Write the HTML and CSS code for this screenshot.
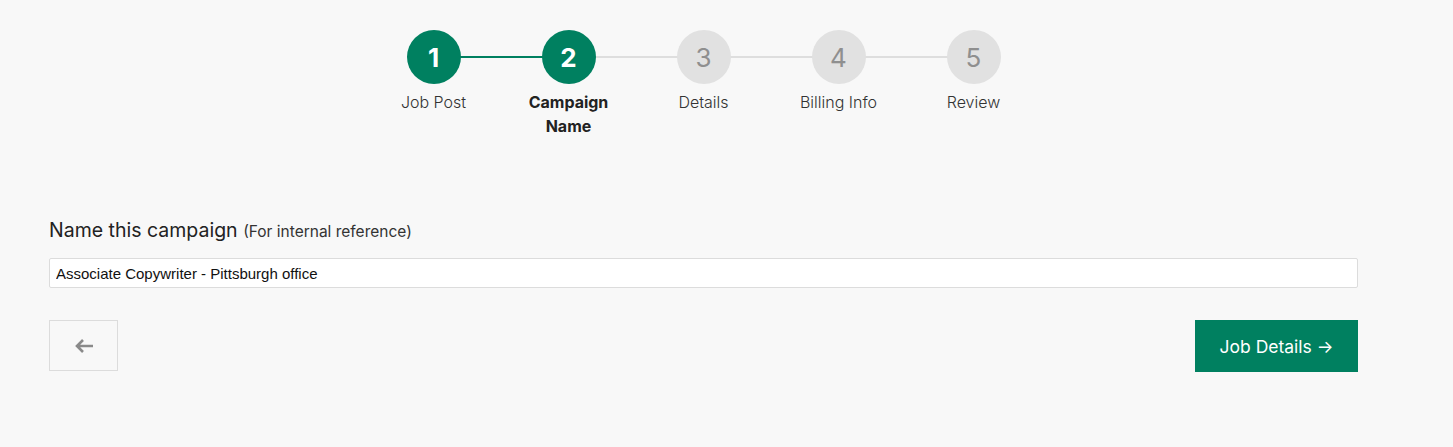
FILE: index.html
```html
<!DOCTYPE html>
<html>
<head>
<meta charset="utf-8">
<link rel="stylesheet" href="styles.css">
</head>
<body>
<div class="page">
  <ol class="stepper">
    <li class="step done"><span class="circle">1</span><span class="label">Job Post</span></li>
    <li class="step active"><span class="circle">2</span><span class="label">Campaign<br>Name</span></li>
    <li class="step"><span class="circle">3</span><span class="label">Details</span></li>
    <li class="step"><span class="circle">4</span><span class="label">Billing Info</span></li>
    <li class="step"><span class="circle">5</span><span class="label">Review</span></li>
  </ol>
  <form class="form">
    <label class="field-label">Name this campaign <span class="hint">(For internal reference)</span></label>
    <input class="input" type="text" value="Associate Copywriter - Pittsburgh office">
    <div class="actions">
      <button type="button" class="btn-back" aria-label="Back">
        <svg width="22" height="16" viewBox="0 0 22 16"><path d="M20 8H4M10 2L4 8l6 6" fill="none" stroke="#8a8a8a" stroke-width="2.6"/></svg>
      </button>
      <button type="button" class="btn-next">Job Details →</button>
    </div>
  </form>
</div>
</body>
</html>
```
FILE: styles.css
```css
html, body { margin: 0; padding: 0; }
body {
  background: #f8f8f8;
  font-family: Inter, "Noto Sans", sans-serif;
  color: #222;
  width: 1453px;
  height: 447px;
  overflow: hidden;
}
.page {
  width: 1309px;
  margin-left: 49px;
  padding-top: 30px;
}
.stepper {
  list-style: none;
  margin: 0;
  padding: 0;
  display: flex;
  justify-content: center;
}
.step {
  width: 135px;
  display: flex;
  flex-direction: column;
  align-items: center;
  position: relative;
}
.step + .step::before {
  content: "";
  position: absolute;
  top: 26px;
  left: -67px;
  width: 135px;
  height: 2px;
  background: #dedede;
  z-index: 0;
}
.step.active::before { background: #008060; }
.circle {
  position: relative;
  z-index: 1;
  width: 54px;
  height: 54px;
  border-radius: 50%;
  background: #e1e1e1;
  color: #8f8f8f;
  display: flex;
  align-items: center;
  justify-content: center;
  font-size: 26px;
  font-weight: 400;
}
.done .circle, .active .circle {
  background: #008060;
  color: #fff;
  font-weight: 700;
}
.label {
  margin-top: 6px;
  font-size: 16px;
  line-height: 24px;
  text-align: center;
  color: #333;
  font-weight: 300;
}
.active .label { font-weight: 700; color: #222; }
.form {
  margin-top: 80px;
  display: flex;
  flex-direction: column;
}
.field-label {
  font-size: 19.5px;
  color: #222;
  font-weight: 400;
  line-height: 24px;
}
.hint { font-size: 15.5px; color: #333; font-weight: 400; }
.input {
  margin-top: 14px;
  height: 30px;
  box-sizing: border-box;
  border: 1px solid #dcdcdc;
  border-radius: 2px;
  background: #fff;
  padding: 0 6px;
  font-family: "Liberation Sans", Arial, sans-serif;
  font-size: 15px;
  color: #111;
  outline: none;
}
.actions {
  margin-top: 32px;
  display: flex;
  justify-content: space-between;
  align-items: flex-start;
}
.btn-back {
  width: 69px;
  height: 51px;
  border: 1px solid #dcdcdc;
  background: #f8f8f8;
  display: flex;
  align-items: center;
  justify-content: center;
  padding: 0;
}
.btn-next {
  width: 163px;
  height: 52px;
  border: none;
  background: #008060;
  color: #fff;
  font-family: Inter, "Noto Sans", sans-serif;
  font-size: 17.5px;
  font-weight: 400;
}
```
